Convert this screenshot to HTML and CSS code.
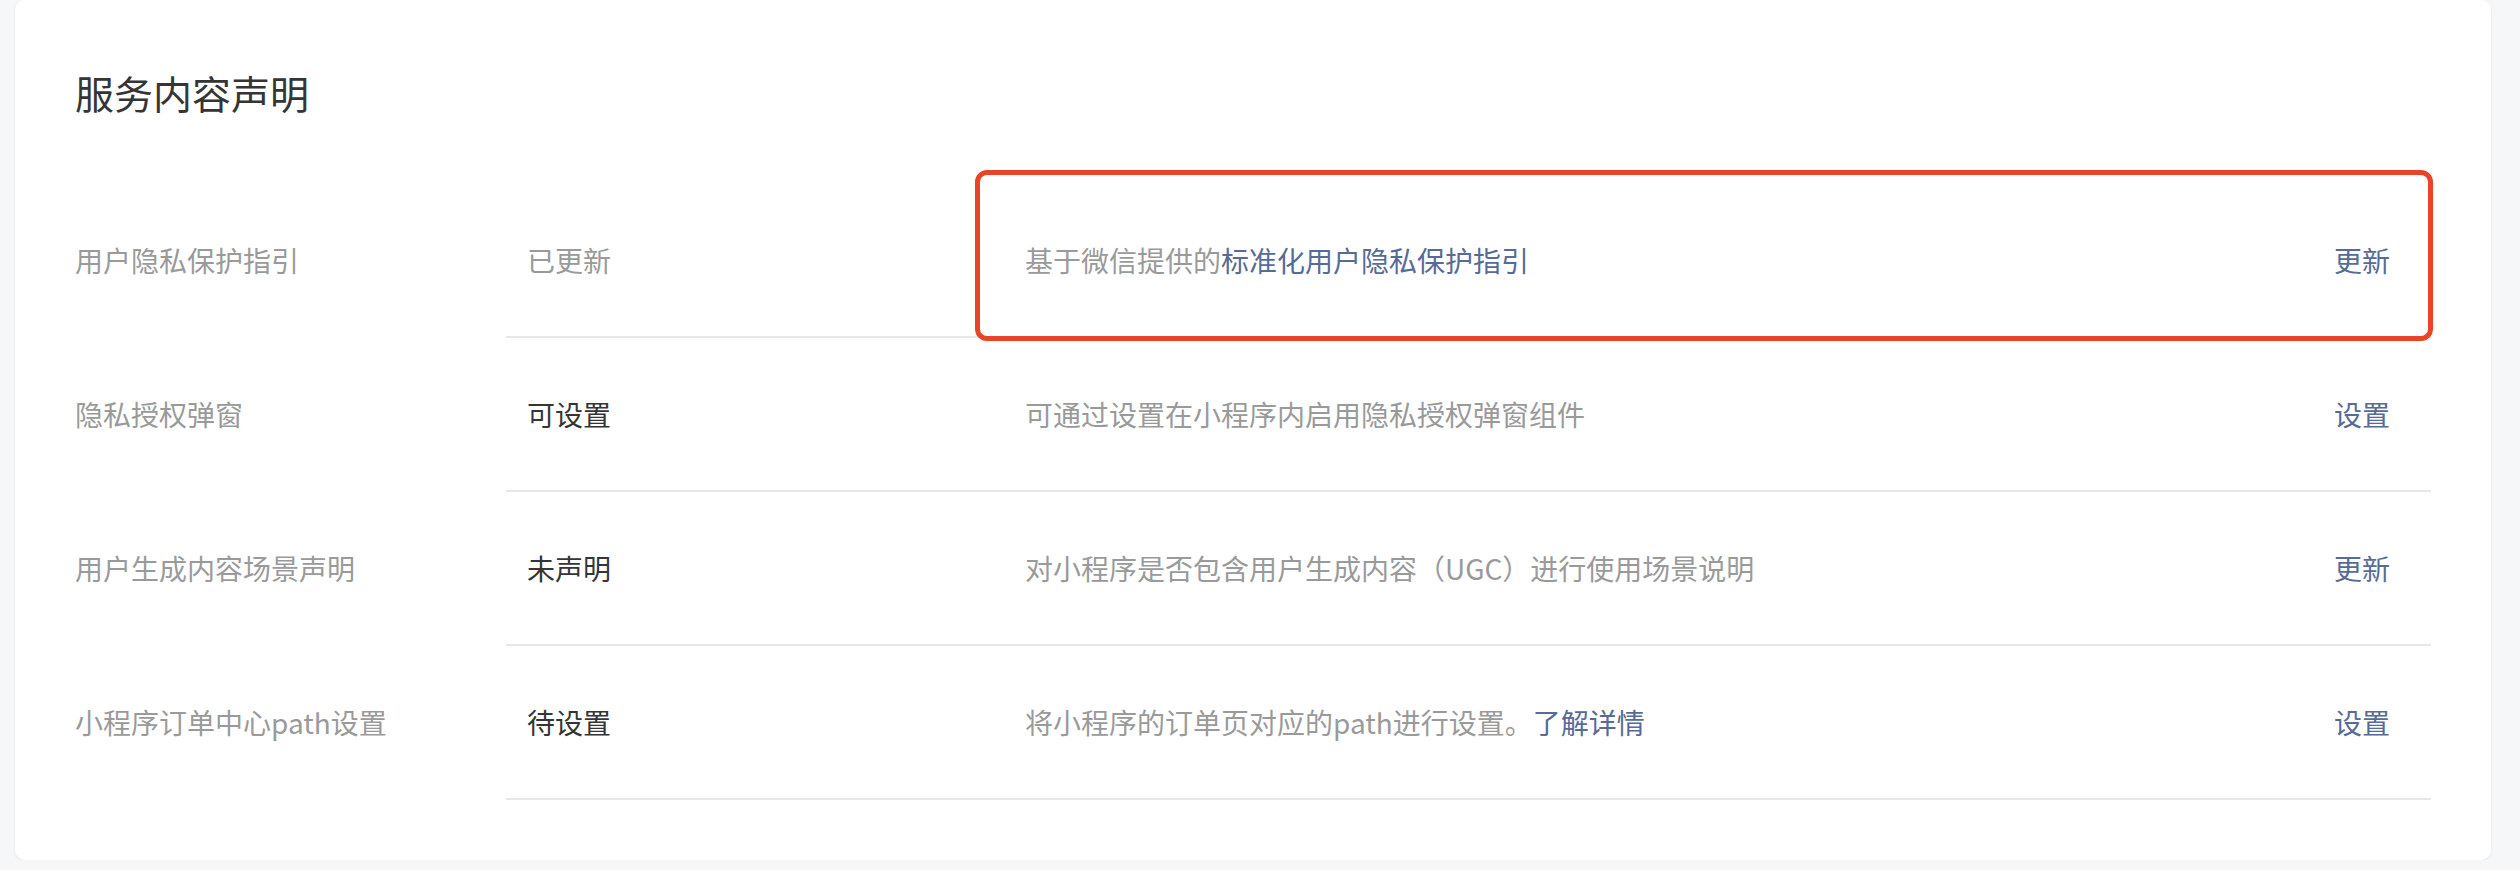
FILE: index.html
```html
<!DOCTYPE html>
<html lang="zh-CN">
<head>
  <meta charset="UTF-8" />
  <meta name="viewport" content="width=device-width, initial-scale=1.0"/>
  <title>服务内容声明</title>
  <link rel="stylesheet" href="styles.css">
</head>
<body>
  <div class="card">
    <h2 class="card-title">服务内容声明</h2>

    <div class="list">
      <div class="row">
        <div class="row-label">用户隐私保护指引</div>
        <div class="row-body">
          <div class="status muted">已更新</div>
          <div class="desc">基于微信提供的<a href="#">标准化用户隐私保护指引</a></div>
          <a class="action" href="#">更新</a>
        </div>
        <span class="highlight"></span>
      </div>

      <div class="row">
        <div class="row-label">隐私授权弹窗</div>
        <div class="row-body">
          <div class="status">可设置</div>
          <div class="desc">可通过设置在小程序内启用隐私授权弹窗组件</div>
          <a class="action" href="#">设置</a>
        </div>
      </div>

      <div class="row">
        <div class="row-label">用户生成内容场景声明</div>
        <div class="row-body">
          <div class="status">未声明</div>
          <div class="desc">对小程序是否包含用户生成内容（UGC）进行使用场景说明</div>
          <a class="action" href="#">更新</a>
        </div>
      </div>

      <div class="row">
        <div class="row-label">小程序订单中心path设置</div>
        <div class="row-body">
          <div class="status">待设置</div>
          <div class="desc">将小程序的订单页对应的path进行设置。<a href="#">了解详情</a></div>
          <a class="action" href="#">设置</a>
        </div>
      </div>
    </div>
  </div>
</body>
</html>
```

FILE: styles.css
```css
body {
  margin: 0;
  background-color: #f6f7f9;
  font-family: "Noto Sans CJK SC", "Noto Sans", sans-serif;
  color: #353535;
}
a {
  color: #576b95;
  text-decoration: none;
}
.card {
  box-sizing: border-box;
  width: 2476px;
  height: 860px;
  margin-left: 15px;
  padding: 72px 60px 0 60px;
  background: #fff;
  border-radius: 10px;
  box-shadow: 0 1px 3px rgba(0, 0, 0, 0.08);
}
.card-title {
  margin: 0;
  font-size: 39px;
  line-height: 40px;
  font-weight: normal;
  color: #353535;
}
.list {
  margin-top: 72px;
}
.row {
  position: relative;
  display: grid;
  grid-template-columns: 431px 1fr;
  align-items: center;
  font-size: 28px;
}
.row-label {
  color: #9a9a9a;
  padding-bottom: 2px;
}
.row-body {
  display: flex;
  align-items: center;
  height: 152px;
  border-bottom: 2px solid #e6e6eb;
}
.status {
  box-sizing: border-box;
  width: 519px;
  padding-left: 21px;
  color: #353535;
}
.status.muted {
  color: #9a9a9a;
}
.desc {
  flex: 1;
  color: #9a9a9a;
}
.action {
  padding-right: 41px;
}
.highlight {
  position: absolute;
  top: -14px;
  bottom: -3px;
  left: 900px;
  right: -2px;
  border: 5px solid #ea4328;
  border-radius: 12px;
  pointer-events: none;
}
```
